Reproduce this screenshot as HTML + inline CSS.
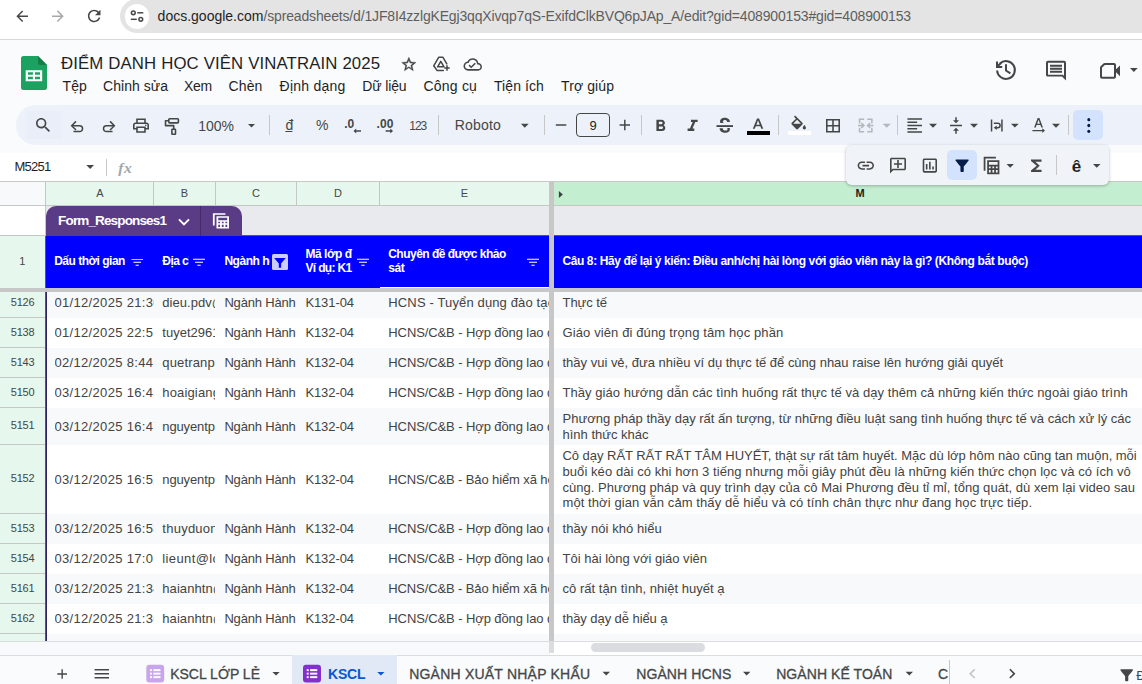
<!DOCTYPE html>
<html lang="vi">
<head>
<meta charset="utf-8">
<title>ĐIỂM DANH HỌC VIÊN VINATRAIN 2025 - Google Trang tính</title>
<style>
html,body{margin:0;padding:0;}
body{width:1142px;height:684px;overflow:hidden;background:#f9fbfd;font-family:"Liberation Sans",sans-serif;}
#app{position:relative;width:1142px;height:684px;overflow:hidden;background:#f9fbfd;}
.b{position:absolute;}
.t{position:absolute;white-space:pre;line-height:20px;height:20px;display:block;}
svg{position:absolute;overflow:visible;}
.sep{position:absolute;width:1px;background:#c7c7c7;}
</style>
</head>
<body>
<div id="app">
<!-- ===== browser chrome ===== -->
<div class="b" style="left:0;top:0;width:1142px;height:39px;background:#fff;"></div>
<div class="b" style="left:0;top:39px;width:1142px;height:1px;background:#d5d7da;"></div>
<div class="b" style="left:119.6px;top:-1px;width:1100px;height:34px;border-radius:17px;background:#e4e4e4;"></div>
<div class="b" style="left:124.5px;top:4px;width:24.5px;height:24.5px;border-radius:50%;background:#fff;"></div>
<svg style="left:0;top:0;color:#474747;" width="1" height="1" fill="#474747"><g transform="translate(13.50 7.50) scale(0.7250 0.7250)"><path d="M20 11H7.83l5.59-5.59L12 4l-8 8 8 8 1.41-1.41L7.83 13H20v-2z"/></g></svg>
<svg style="left:0;top:0;color:#a8a8a8;" width="1" height="1" fill="#a8a8a8"><g transform="translate(49.08 7.42) scale(0.7313 0.7313)"><path d="M12 4l-1.41 1.41L16.17 11H4v2h12.17l-5.58 5.59L12 20l8-8z"/></g></svg>
<svg style="left:0;top:0;color:#474747;" width="1" height="1" fill="#474747"><g transform="translate(84.74 6.54) scale(0.7880 0.7880)"><path d="M17.65 6.35C16.2 4.9 14.21 4 12 4c-4.42 0-7.99 3.58-7.99 8s3.570 8 7.990 8c3.730 0 6.840-2.550 7.730-6h-2.080c-.82 2.330-3.040 4-5.650 4-3.310 0-6-2.690-6-6s2.690-6 6-6c1.660 0 3.140.69 4.220 1.780L13 11h7V4l-2.350 2.350z"/></g></svg>
<svg style="left:0;top:0" width="1" height="1"><g fill="none" stroke="#474747" stroke-width="1.500">
<circle cx="133.300" cy="12.800" r="1.900"/><path d="M137.300 12.800H143.300"/>
<circle cx="140.800" cy="19.300" r="1.900"/><path d="M130.800 19.300H136.800"/></g></svg>
<!-- ===== docs header ===== -->
<svg style="left:21px;top:56px" width="26" height="34" viewBox="0 0 26 34">
<path d="M2.500 0H17L26 9V31.500A2.500 2.500 0 0 1 23.500 34H2.500A2.500 2.500 0 0 1 0 31.500V2.500A2.500 2.500 0 0 1 2.500 0z" fill="#1ba261"/>
<path d="M17 0L26 9H19.500A2.500 2.500 0 0 1 17 6.500z" fill="#137f47"/>
<path d="M4.700 14.200H21.200V25.200H4.700zM6.900 16.200V18.700H11.900V16.200zM14 16.200V18.700H19V16.200zM6.900 20.700V23.200H11.900V20.700zM14 20.700V23.200H19V20.700z" fill="#fff" fill-rule="evenodd"/>
</svg>
<svg style="left:0;top:0;color:#444746;" width="1" height="1" fill="#444746"><g transform="translate(400.27 55.78) scale(0.7150 0.7150)"><path stroke="currentColor" stroke-width="0.600" d="M22 9.240l-7.190-.62L12 2 9.190 8.630 2 9.240l5.460 4.730L5.820 21 12 16.900 18.180 21l-1.630-7.030L22 9.240zM12 15.400l-3.760 2.270 1-4.280-3.320-2.880 4.380-.38L12 6.100l1.710 4.040 4.380.38-3.320 2.880 1 4.280L12 15.400z"/></g></svg>
<svg style="left:0;top:0;color:#444746;" width="1" height="1" fill="#444746"><g transform="translate(463.50 55.25) scale(0.7708 0.7708)"><path d="M19.350 10.040C18.670 6.590 15.640 4 12 4 9.110 4 6.600 5.640 5.350 8.040 2.340 8.360 0 10.910 0 14c0 3.310 2.690 6 6 6h13c2.760 0 5-2.240 5-5 0-2.640-2.050-4.780-4.650-4.960zM19 18H6c-2.210 0-4-1.790-4-4 0-2.050 1.530-3.760 3.560-3.970l1.070-.11.5-.95C8.080 7.140 9.940 6 12 6c2.620 0 4.880 1.860 5.390 4.430l.3 1.500 1.530.11c1.560.1 2.780 1.410 2.780 2.960 0 1.650-1.350 3-3 3zm-9-3.820l-2.090-2.090L6.500 13.500 10 17l6.010-6.010-1.410-1.410z"/></g></svg>
<svg style="left:0;top:0;color:#444746;" width="1" height="1" fill="#444746"><g transform="translate(1044.00 58.71) scale(1.0000 0.9950)"><path d="M21.990 4c0-1.100-.89-2-1.990-2H4c-1.100 0-2 .9-2 2v12c0 1.100.9 2 2 2h14l4 4-.01-18zM20 4v13.170L18.830 16H4V4h16zM6 12h12v2H6zm0-3h12v2H6zm0-3h12v2H6z"/></g></svg>
<svg style="left:0;top:0;color:#444746;" width="1" height="1" fill="#444746"><g transform="translate(1098.00 59.08) scale(1.0000 0.9813)"><path d="M18 10.480V6c0-1.100-.9-2-2-2H6.830c-.53 0-1.040.21-1.410.59L2.590 7.410C2.210 7.790 2 8.300 2 8.830V18c0 1.100.9 2 2 2h12c1.100 0 2-.9 2-2v-4.480l4 3.980v-11l-4 3.980zM16 18H4V8.830L6.830 6H16v12z"/></g></svg>
<svg style="left:0;top:0;color:#444746;" width="1" height="1" fill="#444746"><g transform="translate(1124.61 60.00) scale(0.7700 0.8000)"><path d="M7 10l5 5 5-5z"/></g></svg>
<svg style="left:0;top:0" width="1" height="1"><g fill="none" stroke="#444746" stroke-width="1.500" stroke-linejoin="round" stroke-linecap="round">
<path d="M443.300 70.600H437.200L433.700 65.800L438.800 57.200H442.800L446.800 63.900"/>
<path d="M440.800 61.400L437.600 66.800H444z"/>
<path d="M447 65.300V70.700M444.300 68H449.700" stroke-linecap="butt"/></g>
<g fill="none" stroke="#444746" stroke-width="2"><path d="M997.100 70.500A8.900 8.900 0 1 0 999.900 63.500"/><path d="M1006 64.200V70.500L1010.400 73.300"/></g>
<path fill="#444746" d="M996 61.500L998 61.500L998 64.200L1000.600 62.200L1001.800 63.800L999.300 66H1002.200V68H996z"/></svg>
<!-- ===== toolbar ===== -->
<div class="b" style="left:16px;top:105px;width:1200px;height:40px;border-radius:20px;background:#edf2fa;"></div>
<div class="b" style="left:26px;top:111px;width:36px;height:28px;background:#e9eef8;"></div>
<div class="b" style="left:1073px;top:110px;width:30px;height:30px;border-radius:5px;background:#d3e3fd;"></div>
<div class="sep" style="left:269px;top:115px;height:20px;"></div>
<div class="sep" style="left:438px;top:115px;height:20px;"></div>
<div class="sep" style="left:544px;top:115px;height:20px;"></div>
<div class="sep" style="left:641px;top:115px;height:20px;"></div>
<div class="sep" style="left:778px;top:115px;height:20px;"></div>
<div class="sep" style="left:897px;top:115px;height:20px;"></div>
<div class="sep" style="left:1068px;top:115px;height:20px;"></div>
<div class="b" style="left:576px;top:112.600px;width:32px;height:22.200px;border:1px solid #444746;border-radius:4px;box-sizing:content-box;"></div>
<div class="b" style="left:747px;top:131px;width:23px;height:4px;background:#000;"></div>
<div class="b" style="left:787.5px;top:131px;width:23px;height:4px;background:#fff;"></div>
<svg style="left:0;top:0;color:#444746;" width="1" height="1" fill="#444746"><g transform="translate(33.60 115.60) scale(0.8005 0.8005)"><path d="M15.500 14h-.79l-.28-.27C15.410 12.590 16 11.110 16 9.500 16 5.910 13.090 3 9.500 3S3 5.910 3 9.500 5.910 16 9.500 16c1.610 0 3.090-.59 4.230-1.570l.27.28v.79l5 4.990L20.490 19l-4.990-5zm-6 0C7.010 14 5 11.990 5 9.500S7.010 5 9.500 5 14 7.010 14 9.500 11.990 14 9.500 14z"/></g></svg>
<svg style="left:0;top:0;color:#444746;" width="1" height="1" fill="#444746"><g transform="translate(131.40 116.00) scale(0.8000 0.8000)"><path d="M19 8h-1V3H6v5H5c-1.660 0-3 1.340-3 3v6h4v4h12v-4h4v-6c0-1.660-1.340-3-3-3zM8 5h8v3H8V5zm8 12v2H8v-4h8v2zm2-2v-2H6v2H4v-4c0-.55.45-1 1-1h14c.55 0 1 .45 1 1v4h-2z"/><circle cx="18" cy="11.500" r="1"/></g></svg>
<svg style="left:0;top:0;color:#444746;" width="1" height="1" fill="#444746"><g transform="translate(243.10 116.95) scale(0.7000 0.7000)"><path d="M7 10l5 5 5-5z"/></g></svg>
<svg style="left:0;top:0;color:#444746;" width="1" height="1" fill="#444746"><g transform="translate(515.44 115.95) scale(0.7800 0.7800)"><path d="M7 10l5 5 5-5z"/></g></svg>
<svg style="left:0;top:0;color:#444746;" width="1" height="1" fill="#444746"><g transform="translate(923.40 115.70) scale(0.8000 0.8000)"><path d="M7 10l5 5 5-5z"/></g></svg>
<svg style="left:0;top:0;color:#444746;" width="1" height="1" fill="#444746"><g transform="translate(964.40 115.70) scale(0.8000 0.8000)"><path d="M7 10l5 5 5-5z"/></g></svg>
<svg style="left:0;top:0;color:#444746;" width="1" height="1" fill="#444746"><g transform="translate(1005.61 116.07) scale(0.7700 0.7700)"><path d="M7 10l5 5 5-5z"/></g></svg>
<svg style="left:0;top:0;color:#444746;" width="1" height="1" fill="#444746"><g transform="translate(1046.40 115.70) scale(0.8000 0.8000)"><path d="M7 10l5 5 5-5z"/></g></svg>
<svg style="left:0;top:0;color:#b4b7ba;" width="1" height="1" fill="#b4b7ba"><g transform="translate(877.03 115.58) scale(0.8100 0.8100)"><path d="M7 10l5 5 5-5z"/></g></svg>
<svg style="left:0;top:0;color:#444746;" width="1" height="1" fill="#444746"><g transform="translate(350.77 126.17) scale(0.6818 0.7429)"><path d="M8 3L4 6.500 8 10V7.500h7v-2H8z"/></g></svg>
<svg style="left:0;top:0;color:#444746;" width="1" height="1" fill="#444746"><g transform="translate(382.91 126.17) scale(0.6727 0.7429)"><path d="M11 3l4 3.500-4 3.500V7.500H4v-2h7z"/></g></svg>
<svg style="left:0;top:0;color:#444746;" width="1" height="1" fill="#444746"><g transform="translate(552.05 116.00) scale(0.7500 0.7500)"><path d="M5 11h14v2H5z"/></g></svg>
<svg style="left:0;top:0;color:#444746;" width="1" height="1" fill="#444746"><g transform="translate(615.89 116.09) scale(0.7429 0.7429)"><path d="M19 13h-6v6h-2v-6H5v-2h6V5h2v6h6v2z"/></g></svg>
<svg style="left:0;top:0;color:#444746;" width="1" height="1" fill="#444746"><g transform="translate(650.60 116.47) scale(0.8279 0.8071)"><path d="M15.600 10.790c.97-.67 1.650-1.770 1.650-2.790 0-2.260-1.750-4-4-4H7v14h7.040c2.090 0 3.710-1.700 3.710-3.790 0-1.520-.86-2.820-2.150-3.420zM10 6.500h3c.83 0 1.500.67 1.500 1.500s-.67 1.500-1.500 1.500h-3v-3zm3.500 9H10v-3h3.500c.83 0 1.500.67 1.500 1.500s-.67 1.500-1.500 1.500z"/></g></svg>
<svg style="left:0;top:0;color:#444746;" width="1" height="1" fill="#444746"><g transform="translate(682.60 116.47) scale(0.8333 0.8071)"><path d="M10 4v3h2.210l-3.420 8H6v3h8v-3h-2.210l3.420-8H18V4z"/></g></svg>
<svg style="left:0;top:0;color:#444746;" width="1" height="1" fill="#444746"><g transform="translate(713.75 115.08) scale(0.9167 0.9167)"><path d="M3 11h18v2H3z"/><path d="M7.240 8.750c-.26-.48-.39-1.030-.39-1.670 0-.61.13-1.160.4-1.670.26-.5.630-.93 1.110-1.290.48-.35 1.050-.63 1.700-.83.660-.19 1.390-.29 2.180-.29.810 0 1.540.11 2.210.34.660.22 1.230.54 1.690.94.470.4.830.88 1.080 1.430.25.550.38 1.150.38 1.810h-3.010c0-.31-.05-.59-.15-.85-.09-.27-.24-.49-.44-.68-.2-.19-.45-.33-.75-.44-.3-.1-.66-.16-1.060-.16-.39 0-.74.04-1.030.13-.29.09-.53.21-.72.36-.19.16-.34.34-.44.55-.1.210-.15.430-.15.660 0 .48.25.88.74 1.210.18.120.37.230.6.340H7.390c-.05-.08-.11-.17-.15-.25z"/><path d="M14.500 14c.21.170.35.360.43.570.07.200.11.430.11.690 0 .23-.05.450-.14.660-.09.200-.23.380-.42.530-.19.150-.42.260-.71.350-.29.080-.63.130-1.010.130-.43 0-.83-.04-1.180-.13s-.66-.23-.91-.42c-.25-.19-.45-.44-.59-.75-.14-.31-.25-.76-.25-1.210H6.400c0 .55.080 1.130.24 1.580.16.450.37.850.65 1.210.28.350.6.660.98.920.37.260.78.480 1.220.65.440.17.900.30 1.380.39.480.08.960.13 1.440.13.80 0 1.530-.09 2.180-.28s1.210-.45 1.670-.79c.46-.34.82-.77 1.070-1.270s.38-1.070.38-1.710c0-.45-.06-.87-.18-1.250z"/></g></svg>
<svg style="left:0;top:0;color:#444746;" width="1" height="1" fill="#444746"><g transform="translate(748.37 116.29) scale(0.8065 0.7357)"><path d="M5.490 17h2.420l1.270-3.580h5.650L16.090 17h2.420L13.250 3h-2.500L5.490 17zm4.420-5.610l2.030-5.790h.12l2.030 5.790H9.910z"/></g></svg>
<svg style="left:0;top:0;color:#444746;" width="1" height="1" fill="#444746"><g transform="translate(788.97 115.61) scale(0.8110 0.8110)"><path d="M16.560 8.940L7.620 0 6.210 1.410l2.380 2.380-5.150 5.150c-.59.59-.59 1.540 0 2.120l5.500 5.500c.29.29.68.44 1.060.44s.77-.15 1.060-.44l5.500-5.500c.59-.58.59-1.530 0-2.120zM5.210 10L10 5.210 14.790 10H5.210zM19 11.500s-2 2.170-2 3.500c0 1.100.9 2 2 2s2-.9 2-2c0-1.330-2-3.500-2-3.500z"/></g></svg>
<svg style="left:0;top:0;color:#444746;" width="1" height="1" fill="#444746"><g transform="translate(823.67 116.62) scale(0.7778 0.7611)"><path d="M3 3v18h18V3H3zm8 16H5v-6h6v6zm0-8H5V5h6v6zm8 8h-6v-6h6v6zm0-8h-6V5h6v6z"/></g></svg>
<svg style="left:0;top:0;color:#b4b7ba;" width="1" height="1" fill="#b4b7ba"><g transform="translate(856.46 116.26) scale(0.7700 0.7700)"><path d="M3 3h7v2H5v4H3zM14 3h7v6h-2V5h-5zM3 15h2v4h5v2H3zM19 15h2v6h-7v-2h5zM2 11h5.200L5.600 9.400 7 8l4 4-4 4-1.400-1.400L7.200 13H2zM22 11h-5.200l1.600-1.600L17 8l-4 4 4 4 1.400-1.400-1.600-1.600H22z"/></g></svg>
<svg style="left:0;top:0;color:#444746;" width="1" height="1" fill="#444746"><g transform="translate(904.97 115.77) scale(0.8111 0.8111)"><path d="M15 15H3v2h12v-2zm0-8H3v2h12V7zM3 13h18v-2H3v2zm0 8h18v-2H3v2zM3 3v2h18V3H3z"/></g></svg>
<svg style="left:0;top:0;color:#444746;" width="1" height="1" fill="#444746"><g transform="translate(947.00 116.50) scale(0.7500 0.7500)"><path d="M8 19h3v4h2v-4h3l-4-4-4 4zm8-14h-3V1h-2v4H8l4 4 4-4zM4 11v2h16v-2H4z"/></g></svg>
<svg style="left:0;top:0;color:#444746;" width="1" height="1" fill="#444746"><g transform="translate(987.82 116.57) scale(0.7438 0.7438)"><path d="M4 4h2v16H4zM18 4h2v16h-2z"/><path fill="none" stroke="currentColor" stroke-width="2" d="M8 9h5.500a3 3 0 0 1 0 6H10"/><path d="M12 12l-4 3 4 3z"/></g></svg>
<svg style="left:0;top:0;color:#444746;" width="1" height="1" fill="#444746"><g transform="translate(1030.36 117.33) scale(0.6811 0.6811)"><path d="M5.490 15h2.420l1.270-3.580h5.650L16.090 15h2.420L13.250 1h-2.500L5.490 15zm4.420-5.610l2.030-5.790h.12l2.030 5.790H9.910z"/><path d="M3 18.500h14.500V16l4 3.500-4 3.500v-2.500H3z"/></g></svg>
<svg style="left:0;top:0;color:#041e49;" width="1" height="1" fill="#041e49"><g transform="translate(1079.80 115.50) scale(0.7500 0.8333)"><circle cx="12" cy="5" r="2"/><circle cx="12" cy="12" r="2"/><circle cx="12" cy="19" r="2"/></g></svg>
<svg style="left:0;top:0" width="1" height="1"><g fill="none" stroke="#444746" stroke-width="1.500">
<path d="M72 125.700H79.600a2.950 2.950 0 0 1 0 5.900H73.500"/><path d="M76 121.400L71.700 125.700L76 130"/>
<path d="M114.050 125.700H106.450a2.950 2.950 0 0 0 0 5.900H112.550"/><path d="M110.050 121.400L114.350 125.700L110.050 130"/>
<g stroke-width="1.600" stroke-linejoin="round"><rect x="168.800" y="118.700" width="9.600" height="4.200" rx="0.800"/><path d="M168.800 120.800H165.500V125.600H173.700V129.200"/><rect x="171.900" y="129.200" width="3.600" height="5" rx="0.500"/></g>
</g></svg>
<!-- ===== formula bar ===== -->
<div class="b" style="left:0;top:152.5px;width:1142px;height:28.5px;background:#fff;"></div>
<div class="b" style="left:0;top:181px;width:1142px;height:1px;background:#c7c7c7;"></div>
<div class="sep" style="left:106px;top:159px;height:17px;background:#c7c7c7;"></div>
<!-- ===== grid ===== -->
<div class="b" style="left:0px;top:182px;width:1142px;height:23.5px;background:#e6f7ed;"></div>
<div class="b" style="left:0px;top:182px;width:45.5px;height:23.5px;background:#f8f9fa;"></div>
<div class="b" style="left:554px;top:182px;width:588px;height:23.5px;background:#c4eed0;"></div>
<div class="b" style="left:45.0px;top:182px;width:1px;height:23.5px;background:#c4c7c5;"></div>
<div class="b" style="left:153.0px;top:182px;width:1px;height:23.5px;background:#c4c7c5;"></div>
<div class="b" style="left:215.0px;top:182px;width:1px;height:23.5px;background:#c4c7c5;"></div>
<div class="b" style="left:296.0px;top:182px;width:1px;height:23.5px;background:#c4c7c5;"></div>
<div class="b" style="left:379.0px;top:182px;width:1px;height:23.5px;background:#c4c7c5;"></div>
<div class="b" style="left:0px;top:205px;width:1142px;height:1px;background:#c4c7c5;"></div>
<div class="b" style="left:0px;top:206px;width:1142px;height:29.5px;background:#e8eaed;"></div>
<div class="b" style="left:0px;top:206px;width:45.5px;height:29.5px;background:#fff;"></div>
<div class="b" style="left:45px;top:206px;width:1px;height:29.5px;background:#c4c7c5;"></div>
<div class="b" style="left:0px;top:235px;width:45.5px;height:1px;background:#c4c7c5;"></div>
<div class="b" style="left:46px;top:206px;width:196px;height:30px;background:#5a3c86;border-radius:10px 10px 0 0;"></div>
<div class="b" style="left:200px;top:206px;width:1px;height:29.5px;background:#452b6c;"></div>
<div class="b" style="left:242px;top:235px;width:900px;height:1px;background:#188038;"></div>
<div class="b" style="left:0px;top:236px;width:45.5px;height:51.5px;background:#e6f7ed;"></div>
<div class="b" style="left:46px;top:236px;width:1096px;height:51.5px;background:#0000ff;"></div>
<div class="b" style="left:380px;top:286.5px;width:170px;height:1px;background:#fff;"></div>
<div class="b" style="left:45px;top:236px;width:1px;height:51.5px;background:#188038;"></div>
<div class="b" style="left:272.2px;top:254px;width:15.8px;height:15.8px;background:#ccccff;border-radius:1.500px;"></div>
<div class="b" style="left:46px;top:291.5px;width:1096px;height:26.0px;background:#f8f9fa;"></div>
<div class="b" style="left:0px;top:291.5px;width:45.5px;height:26.0px;background:#e6f7ed;"></div>
<div class="b" style="left:0px;top:317.0px;width:45.5px;height:1px;background:#c4c7c5;"></div>
<div class="b" style="left:46px;top:317.5px;width:1096px;height:30.0px;background:#ffffff;"></div>
<div class="b" style="left:0px;top:317.5px;width:45.5px;height:30.0px;background:#e6f7ed;"></div>
<div class="b" style="left:0px;top:347.0px;width:45.5px;height:1px;background:#c4c7c5;"></div>
<div class="b" style="left:46px;top:347.5px;width:1096px;height:30.0px;background:#f8f9fa;"></div>
<div class="b" style="left:0px;top:347.5px;width:45.5px;height:30.0px;background:#e6f7ed;"></div>
<div class="b" style="left:0px;top:377.0px;width:45.5px;height:1px;background:#c4c7c5;"></div>
<div class="b" style="left:46px;top:377.5px;width:1096px;height:30.0px;background:#ffffff;"></div>
<div class="b" style="left:0px;top:377.5px;width:45.5px;height:30.0px;background:#e6f7ed;"></div>
<div class="b" style="left:0px;top:407.0px;width:45.5px;height:1px;background:#c4c7c5;"></div>
<div class="b" style="left:46px;top:407.5px;width:1096px;height:37.0px;background:#f8f9fa;"></div>
<div class="b" style="left:0px;top:407.5px;width:45.5px;height:37.0px;background:#e6f7ed;"></div>
<div class="b" style="left:0px;top:444.0px;width:45.5px;height:1px;background:#c4c7c5;"></div>
<div class="b" style="left:46px;top:444.5px;width:1096px;height:69.0px;background:#ffffff;"></div>
<div class="b" style="left:0px;top:444.5px;width:45.5px;height:69.0px;background:#e6f7ed;"></div>
<div class="b" style="left:0px;top:513.0px;width:45.5px;height:1px;background:#c4c7c5;"></div>
<div class="b" style="left:46px;top:513.5px;width:1096px;height:30.0px;background:#f8f9fa;"></div>
<div class="b" style="left:0px;top:513.5px;width:45.5px;height:30.0px;background:#e6f7ed;"></div>
<div class="b" style="left:0px;top:543.0px;width:45.5px;height:1px;background:#c4c7c5;"></div>
<div class="b" style="left:46px;top:543.5px;width:1096px;height:30.0px;background:#ffffff;"></div>
<div class="b" style="left:0px;top:543.5px;width:45.5px;height:30.0px;background:#e6f7ed;"></div>
<div class="b" style="left:0px;top:573.0px;width:45.5px;height:1px;background:#c4c7c5;"></div>
<div class="b" style="left:46px;top:573.5px;width:1096px;height:30.0px;background:#f8f9fa;"></div>
<div class="b" style="left:0px;top:573.5px;width:45.5px;height:30.0px;background:#e6f7ed;"></div>
<div class="b" style="left:0px;top:603.0px;width:45.5px;height:1px;background:#c4c7c5;"></div>
<div class="b" style="left:46px;top:603.5px;width:1096px;height:30.0px;background:#ffffff;"></div>
<div class="b" style="left:0px;top:603.5px;width:45.5px;height:30.0px;background:#e6f7ed;"></div>
<div class="b" style="left:0px;top:633.0px;width:45.5px;height:1px;background:#c4c7c5;"></div>
<div class="b" style="left:46px;top:633.5px;width:1096px;height:7.5px;background:#f8f9fa;"></div>
<div class="b" style="left:0px;top:633.5px;width:45.5px;height:7.5px;background:#e6f7ed;"></div>
<div class="b" style="left:0px;top:287.5px;width:1142px;height:4px;background:#c7c7c7;"></div>
<div class="b" style="left:45px;top:291.5px;width:1px;height:349.5px;background:#188038;"></div>
<div class="b" style="left:46px;top:291.5px;width:1px;height:349.5px;background:#2f2163;"></div>
<div class="b" style="left:549px;top:182px;width:5px;height:459px;background:#c7c7c7;"></div>
<div class="b" style="left:0px;top:641px;width:1142px;height:14px;background:#ffffff;"></div>
<div class="b" style="left:0px;top:641px;width:549.5px;height:14px;background:#f8f9fa;"></div>
<div class="b" style="left:0px;top:641px;width:1142px;height:1px;background:#dadce0;"></div>
<div class="b" style="left:549px;top:642px;width:5px;height:10.5px;background:#dadce0;"></div>
<div class="b" style="left:591px;top:643px;width:114px;height:8.5px;background:#dadce0;border-radius:4.5px;"></div>
<svg style="left:0;top:0;color:#3c4043;" width="1" height="1" fill="#3c4043"><g transform="translate(558.90 190.90) scale(0.7800 1.0143)"><path d="M0 0l5 3.500L0 7z"/></g></svg>
<svg style="left:0;top:0;color:#fff;" width="1" height="1" fill="#fff"><g transform="translate(173.09 211.22) scale(0.9091 0.9091)"><path fill="none" stroke="currentColor" stroke-width="2.200" d="M6.500 9l5.500 5.500L17.500 9"/></g></svg>
<svg style="left:0;top:0;color:#fff;" width="1" height="1" fill="#fff"><g transform="translate(209.32 211.78) scale(0.8944 0.7600)"><path d="M8 6h14v16H8zm2 2v3h10V8zm0 5v2h2v-2zm4 0v2h2v-2zm4 0v2h2v-2zm-8 4v3h2v-3zm4 0v3h2v-3zm4 0v3h2v-3z" fill-rule="evenodd"/><path d="M4 2h14v2H6v14H4z"/></g></svg>
<svg style="left:0;top:0;color:#fff;" width="1" height="1" fill="#fff"><g transform="translate(129.47 254.57) scale(0.6444 0.6444)"><path d="M9.500 17.200h5v-1.400h-5zM3 6.800v1.400h18V6.800zM6 12.700h12v-1.400H6z"/></g></svg>
<svg style="left:0;top:0;color:#fff;" width="1" height="1" fill="#fff"><g transform="translate(191.00 254.30) scale(0.6667 0.6667)"><path d="M9.500 17.200h5v-1.400h-5zM3 6.800v1.400h18V6.800zM6 12.700h12v-1.400H6z"/></g></svg>
<svg style="left:0;top:0;color:#fff;" width="1" height="1" fill="#fff"><g transform="translate(355.00 254.30) scale(0.6667 0.6667)"><path d="M9.500 17.200h5v-1.400h-5zM3 6.800v1.400h18V6.800zM6 12.700h12v-1.400H6z"/></g></svg>
<svg style="left:0;top:0;color:#fff;" width="1" height="1" fill="#fff"><g transform="translate(525.00 254.30) scale(0.6667 0.6667)"><path d="M9.500 17.200h5v-1.400h-5zM3 6.800v1.400h18V6.800zM6 12.700h12v-1.400H6z"/></g></svg>
<svg style="left:0;top:0" width="1" height="1"><path fill="#0000ff" d="M274.200 258H285.700L281.100 263.500V267.800H278.800V263.500z"/></svg>
<!-- ===== overflow popup ===== -->
<div class="b" style="left:846px;top:145px;width:262.5px;height:40px;border-radius:6px;background:#f0f4f9;box-shadow:0 1px 3px 1px rgba(60,64,67,.12),0 1px 2px rgba(60,64,67,.18);"></div>
<div class="b" style="left:947px;top:150px;width:30px;height:30px;border-radius:5px;background:#d3e3fd;"></div>
<div class="sep" style="left:1056px;top:155px;height:20px;"></div>
<svg style="left:0;top:0;color:#444746;" width="1" height="1" fill="#444746"><g transform="translate(80.91 157.00) scale(0.7700 0.8000)"><path d="M7 10l5 5 5-5z"/></g></svg>
<svg style="left:0;top:0;color:#444746;" width="1" height="1" fill="#444746"><g transform="translate(855.96 155.76) scale(0.8200 0.8200)"><path d="M3.900 12c0-1.710 1.390-3.100 3.100-3.100h4V7H7c-2.760 0-5 2.240-5 5s2.240 5 5 5h4v-1.900H7c-1.710 0-3.100-1.390-3.100-3.100zM8 13h8v-2H8v2zm9-6h-4v1.900h4c1.710 0 3.100 1.390 3.100 3.100s-1.390 3.100-3.100 3.100h-4V17h4c2.760 0 5-2.240 5-5s-2.240-5-5-5z"/></g></svg>
<svg style="left:0;top:0;color:#444746;" width="1" height="1" fill="#444746"><g transform="translate(888.40 156.12) scale(0.8000 0.7900)"><path d="M2 4c0-1.100.9-2 2-2h16c1.100 0 2 .9 2 2v12c0 1.100-.9 2-2 2H6l-4 4V4zm2 13.170L5.170 16H20V4H4v13.170zM11 5h2v4h4v2h-4v4h-2v-4H7V9h4z"/></g></svg>
<svg style="left:0;top:0;color:#444746;" width="1" height="1" fill="#444746"><g transform="translate(920.32 156.13) scale(0.7944 0.7889)"><path d="M9 17H7v-7h2v7zm4 0h-2V7h2v10zm4 0h-2v-4h2v4zm2 2H5V5h14v14zm0-16H5c-1.100 0-2 .9-2 2v14c0 1.100.9 2 2 2h14c1.100 0 2-.9 2-2V5c0-1.100-.9-2-2-2z"/></g></svg>
<svg style="left:0;top:0;color:#041e49;" width="1" height="1" fill="#041e49"><g transform="translate(952.15 156.38) scale(0.8295 0.7812)"><path d="M4.250 5.610C6.270 8.200 10 13 10 13v6c0 .55.45 1 1 1h2c.55 0 1-.45 1-1v-6s3.720-4.800 5.740-7.390c.51-.66.04-1.610-.79-1.610H5.040c-.83 0-1.300.95-.79 1.610z"/></g></svg>
<svg style="left:0;top:0;color:#444746;" width="1" height="1" fill="#444746"><g transform="translate(980.21 155.13) scale(0.8722 0.8722)"><path d="M8 6h14v16H8zm2 2v3h10V8zm0 5v2h2v-2zm4 0v2h2v-2zm4 0v2h2v-2zm-8 4v3h2v-3zm4 0v3h2v-3zm4 0v3h2v-3z" fill-rule="evenodd"/><path d="M4 2h14v2H6v14H4z"/></g></svg>
<svg style="left:0;top:0;color:#444746;" width="1" height="1" fill="#444746"><g transform="translate(1001.32 156.55) scale(0.7400 0.7400)"><path d="M7 10l5 5 5-5z"/></g></svg>
<svg style="left:0;top:0;color:#444746;" width="1" height="1" fill="#444746"><g transform="translate(1025.75 156.38) scale(0.8750 0.7812)"><path d="M18 4H6v2l6.500 6L6 18v2h12v-3h-7l5-5-5-5h7z"/></g></svg>
<svg style="left:0;top:0;color:#444746;" width="1" height="1" fill="#444746"><g transform="translate(1087.75 156.43) scale(0.7500 0.7500)"><path d="M7 10l5 5 5-5z"/></g></svg>
<!-- ===== bottom bar ===== -->
<div class="b" style="left:0;top:655px;width:1142px;height:29px;background:#f9fbfd;"></div>
<div class="b" style="left:0;top:654.5px;width:1142px;height:1px;background:#dadce0;"></div>
<div class="b" style="left:292.3px;top:655px;width:104.6px;height:29px;background:#e1e9f7;"></div>
<div class="b" style="left:949px;top:660px;width:1px;height:24px;background:#c4c7c5;"></div>
<svg style="left:0;top:0;color:#444746;" width="1" height="1" fill="#444746"><g transform="translate(53.84 665.69) scale(0.6929 0.6929)"><path d="M19 13h-6v6h-2v-6H5v-2h6V5h2v6h6v2z"/></g></svg>
<svg style="left:0;top:0;color:#444746;" width="1" height="1" fill="#444746"><g transform="translate(92.20 664.20) scale(0.8000 0.8000)"><path d="M3 18h18v-2H3v2zm0-5h18v-2H3v2zm0-7v2h18V6H3z"/></g></svg>
<svg style="left:0;top:0;color:#c8a6ec;" width="1" height="1" fill="#c8a6ec"><g transform="translate(146.30 664.70) scale(0.7458 0.7458)"><rect x="0" y="0" width="24" height="24" rx="4"/><g fill="#fff"><rect x="5" y="6" width="2.600" height="2.600"/><rect x="9.500" y="6" width="9.500" height="2.600"/><rect x="5" y="10.700" width="2.600" height="2.600"/><rect x="9.500" y="10.700" width="9.500" height="2.600"/><rect x="5" y="15.400" width="2.600" height="2.600"/><rect x="9.500" y="15.400" width="9.500" height="2.600"/></g></g></svg>
<svg style="left:0;top:0;color:#8430ce;" width="1" height="1" fill="#8430ce"><g transform="translate(303.00 664.70) scale(0.7500 0.7458)"><rect x="0" y="0" width="24" height="24" rx="4"/><g fill="#fff"><rect x="5" y="6" width="2.600" height="2.600"/><rect x="9.500" y="6" width="9.500" height="2.600"/><rect x="5" y="10.700" width="2.600" height="2.600"/><rect x="9.500" y="10.700" width="9.500" height="2.600"/><rect x="5" y="15.400" width="2.600" height="2.600"/><rect x="9.500" y="15.400" width="9.500" height="2.600"/></g></g></svg>
<svg style="left:0;top:0;color:#444746;" width="1" height="1" fill="#444746"><g transform="translate(267.29 664.58) scale(0.7300 0.7300)"><path d="M7 10l5 5 5-5z"/></g></svg>
<svg style="left:0;top:0;color:#0b57d0;" width="1" height="1" fill="#0b57d0"><g transform="translate(372.09 664.58) scale(0.7300 0.7300)"><path d="M7 10l5 5 5-5z"/></g></svg>
<svg style="left:0;top:0;color:#444746;" width="1" height="1" fill="#444746"><g transform="translate(597.25 664.33) scale(0.7500 0.7500)"><path d="M7 10l5 5 5-5z"/></g></svg>
<svg style="left:0;top:0;color:#444746;" width="1" height="1" fill="#444746"><g transform="translate(737.82 664.45) scale(0.7400 0.7400)"><path d="M7 10l5 5 5-5z"/></g></svg>
<svg style="left:0;top:0;color:#444746;" width="1" height="1" fill="#444746"><g transform="translate(900.42 664.45) scale(0.7400 0.7400)"><path d="M7 10l5 5 5-5z"/></g></svg>
<svg style="left:0;top:0;color:#c4c7c5;" width="1" height="1" fill="#c4c7c5"><g transform="translate(961.88 663.75) scale(0.8772 0.8250)"><path d="M15.410 7.410L14 6l-6 6 6 6 1.410-1.410L10.830 12z"/></g></svg>
<svg style="left:0;top:0;color:#444746;" width="1" height="1" fill="#444746"><g transform="translate(1002.23 663.75) scale(0.8232 0.8250)"><path d="M10 6L8.590 7.410 13.170 12l-4.580 4.590L10 18l6-6z"/></g></svg>
<svg style="left:0;top:0;color:#444746;" width="1" height="1" fill="#444746"><g transform="translate(1117.20 666.18) scale(0.7918 0.7562)"><path d="M4.250 5.610C6.270 8.200 10 13 10 13v6c0 .55.45 1 1 1h2c.55 0 1-.45 1-1v-6s3.720-4.800 5.740-7.390c.51-.66.04-1.610-.79-1.610H5.040c-.83 0-1.300.95-.79 1.610z"/></g></svg>
<!-- ===== texts ===== -->
<span class="t" style="left:157.6px;top:6.0px;font-size:14px;color:#1f1f1f;">docs.google.com</span>
<span class="t" style="left:263.5px;top:6.0px;font-size:14px;color:#5e5e5e;letter-spacing:-0.161px;">/spreadsheets/d/1JF8I4zzlgKEgj3qqXivqp7qS-ExifdClkBVQ6pJAp_A/edit?gid=408900153#gid=408900153</span>
<span class="t" style="left:61.0px;top:53.5px;font-size:16.8px;color:#1f1f1f;letter-spacing:0.133px;">ĐIỂM DANH HỌC VIÊN VINATRAIN 2025</span>
<span class="t" style="left:62.4px;top:76.0px;font-size:14px;color:#1f1f1f;letter-spacing:0.190px;">Tệp</span>
<span class="t" style="left:103.0px;top:76.0px;font-size:14px;color:#1f1f1f;letter-spacing:0.042px;">Chỉnh sửa</span>
<span class="t" style="left:184.0px;top:76.0px;font-size:14px;color:#1f1f1f;letter-spacing:-0.319px;">Xem</span>
<span class="t" style="left:228.4px;top:76.0px;font-size:14px;color:#1f1f1f;letter-spacing:0.180px;">Chèn</span>
<span class="t" style="left:279.6px;top:76.0px;font-size:14px;color:#1f1f1f;letter-spacing:0.220px;">Định dạng</span>
<span class="t" style="left:362.3px;top:76.0px;font-size:14px;color:#1f1f1f;letter-spacing:-0.150px;">Dữ liệu</span>
<span class="t" style="left:423.5px;top:76.0px;font-size:14px;color:#1f1f1f;letter-spacing:0.207px;">Công cụ</span>
<span class="t" style="left:494.0px;top:76.0px;font-size:14px;color:#1f1f1f;letter-spacing:0.069px;">Tiện ích</span>
<span class="t" style="left:561.0px;top:76.0px;font-size:14px;color:#1f1f1f;letter-spacing:0.102px;">Trợ giúp</span>
<span class="t" style="left:198.3px;top:116.0px;font-size:14px;color:#444746;letter-spacing:-0.089px;">100%</span>
<span class="t" style="left:285.4px;top:115.0px;font-size:14px;color:#444746;letter-spacing:-0.797px;text-decoration:underline;">đ</span>
<span class="t" style="left:316.0px;top:115.0px;font-size:14px;color:#444746;letter-spacing:-1.953px;">%</span>
<span class="t" style="left:344.3px;top:114.0px;font-size:12px;color:#444746;font-weight:700;letter-spacing:-0.210px;">.0</span>
<span class="t" style="left:376.4px;top:114.0px;font-size:12px;color:#444746;font-weight:700;letter-spacing:0.165px;">.00</span>
<span class="t" style="left:409.2px;top:116.0px;font-size:12px;color:#444746;letter-spacing:-0.972px;">123</span>
<span class="t" style="left:454.7px;top:115.0px;font-size:14px;color:#444746;letter-spacing:0.208px;">Roboto</span>
<span class="t" style="left:589.5px;top:115.5px;font-size:13px;color:#1f1f1f;letter-spacing:-0.234px;">9</span>
<span class="t" style="left:1071.7px;top:156.5px;font-size:17px;color:#1f1f1f;font-weight:700;letter-spacing:0.831px;">ê</span>
<span class="t" style="left:14.5px;top:156.5px;font-size:13px;color:#1f1f1f;letter-spacing:-0.767px;">M5251</span>
<span class="t" style="left:118.3px;top:157.5px;font-size:15.5px;color:#a3a7ab;font-weight:700;font-family:'Liberation Serif', serif;letter-spacing:0.452px;font-style:italic;">fx</span>
<span class="t" style="left:99.8px;top:183.0px;font-size:11px;color:#444746;transform:translateX(-50%);">A</span>
<span class="t" style="left:184.5px;top:183.0px;font-size:11px;color:#444746;transform:translateX(-50%);">B</span>
<span class="t" style="left:256.0px;top:183.0px;font-size:11px;color:#444746;transform:translateX(-50%);">C</span>
<span class="t" style="left:338.0px;top:183.0px;font-size:11px;color:#444746;transform:translateX(-50%);">D</span>
<span class="t" style="left:464.5px;top:183.0px;font-size:11px;color:#444746;transform:translateX(-50%);">E</span>
<span class="t" style="left:860.0px;top:183.0px;font-size:11px;color:#1f1f1f;font-weight:700;transform:translateX(-50%);">M</span>
<span class="t" style="left:58.1px;top:210.5px;font-size:13.5px;color:#fff;font-weight:700;letter-spacing:-0.855px;">Form_Responses1</span>
<span class="t" style="left:54.2px;top:251.0px;font-size:12px;color:#fff;font-weight:700;letter-spacing:-0.496px;">Dấu thời gian</span>
<span class="t" style="left:162.3px;top:251.0px;font-size:12px;color:#fff;font-weight:700;letter-spacing:-0.553px;width:27.2px;overflow:hidden;">Địa chỉ</span>
<span class="t" style="left:224.4px;top:251.0px;font-size:12px;color:#fff;font-weight:700;letter-spacing:-0.462px;width:45.6px;overflow:hidden;">Ngành học</span>
<span class="t" style="left:305.4px;top:244.0px;font-size:12px;color:#fff;font-weight:700;letter-spacing:-0.450px;">Mã lớp đ</span>
<span class="t" style="left:305.4px;top:258.0px;font-size:12px;color:#fff;font-weight:700;letter-spacing:-0.637px;">Ví dụ: K1</span>
<span class="t" style="left:388.2px;top:244.0px;font-size:12px;color:#fff;font-weight:700;letter-spacing:-0.511px;">Chuyên đề được khảo</span>
<span class="t" style="left:388.2px;top:258.0px;font-size:12px;color:#fff;font-weight:700;letter-spacing:-0.378px;">sát</span>
<span class="t" style="left:562.4px;top:251.0px;font-size:12px;color:#fff;font-weight:700;letter-spacing:-0.386px;">Câu 8: Hãy để lại ý kiến: Điều anh/chị hài lòng với giáo viên này là gì? (Không bắt buộc)</span>
<span class="t" style="left:22.3px;top:251.0px;font-size:11px;color:#444746;transform:translateX(-50%);">1</span>
<span class="t" style="left:10.8px;top:292.0px;font-size:11px;color:#444746;letter-spacing:-0.224px;">5126</span>
<span class="t" style="left:10.8px;top:322.0px;font-size:11px;color:#444746;letter-spacing:-0.224px;">5138</span>
<span class="t" style="left:10.8px;top:352.0px;font-size:11px;color:#444746;letter-spacing:-0.224px;">5143</span>
<span class="t" style="left:10.8px;top:382.0px;font-size:11px;color:#444746;letter-spacing:-0.224px;">5150</span>
<span class="t" style="left:10.8px;top:415.0px;font-size:11px;color:#444746;letter-spacing:-0.224px;">5151</span>
<span class="t" style="left:10.8px;top:468.0px;font-size:11px;color:#444746;letter-spacing:-0.224px;">5152</span>
<span class="t" style="left:10.8px;top:518.0px;font-size:11px;color:#444746;letter-spacing:-0.224px;">5153</span>
<span class="t" style="left:10.8px;top:548.0px;font-size:11px;color:#444746;letter-spacing:-0.224px;">5154</span>
<span class="t" style="left:10.8px;top:578.0px;font-size:11px;color:#444746;letter-spacing:-0.224px;">5161</span>
<span class="t" style="left:10.8px;top:608.0px;font-size:11px;color:#444746;letter-spacing:-0.224px;">5162</span>
<span class="t" style="left:54.5px;top:292.5px;font-size:13px;color:#434343;letter-spacing:0.318px;width:99.0px;overflow:hidden;">01/12/2025 21:30</span>
<span class="t" style="left:162.3px;top:292.5px;font-size:13px;color:#434343;letter-spacing:0.046px;width:52.9px;overflow:hidden;">dieu.pdv@</span>
<span class="t" style="left:224.4px;top:292.5px;font-size:13px;color:#434343;letter-spacing:-0.189px;width:71.6px;overflow:hidden;">Ngành Hành chính</span>
<span class="t" style="left:305.4px;top:292.5px;font-size:13px;color:#434343;letter-spacing:-0.086px;">K131-04</span>
<span class="t" style="left:388.3px;top:292.5px;font-size:13px;color:#434343;letter-spacing:0.139px;width:161.0px;overflow:hidden;">HCNS - Tuyển dụng đào tạo</span>
<span class="t" style="left:54.5px;top:322.5px;font-size:13px;color:#434343;letter-spacing:0.318px;width:99.0px;overflow:hidden;">01/12/2025 22:51</span>
<span class="t" style="left:162.3px;top:322.5px;font-size:13px;color:#434343;letter-spacing:0.017px;width:52.9px;overflow:hidden;">tuyet2961</span>
<span class="t" style="left:224.4px;top:322.5px;font-size:13px;color:#434343;letter-spacing:-0.189px;width:71.6px;overflow:hidden;">Ngành Hành chính</span>
<span class="t" style="left:305.4px;top:322.5px;font-size:13px;color:#434343;letter-spacing:-0.086px;">K132-04</span>
<span class="t" style="left:388.3px;top:322.5px;font-size:13px;color:#434343;letter-spacing:-0.097px;width:161.0px;overflow:hidden;">HCNS/C&amp;B - Hợp đồng lao động</span>
<span class="t" style="left:54.5px;top:352.5px;font-size:13px;color:#434343;letter-spacing:0.318px;width:99.0px;overflow:hidden;">02/12/2025 8:44:</span>
<span class="t" style="left:162.3px;top:352.5px;font-size:13px;color:#434343;letter-spacing:0.156px;width:52.9px;overflow:hidden;">quetranph</span>
<span class="t" style="left:224.4px;top:352.5px;font-size:13px;color:#434343;letter-spacing:-0.189px;width:71.6px;overflow:hidden;">Ngành Hành chính</span>
<span class="t" style="left:305.4px;top:352.5px;font-size:13px;color:#434343;letter-spacing:-0.086px;">K132-04</span>
<span class="t" style="left:388.3px;top:352.5px;font-size:13px;color:#434343;letter-spacing:-0.097px;width:161.0px;overflow:hidden;">HCNS/C&amp;B - Hợp đồng lao động</span>
<span class="t" style="left:54.5px;top:382.5px;font-size:13px;color:#434343;letter-spacing:0.318px;width:99.0px;overflow:hidden;">03/12/2025 16:45</span>
<span class="t" style="left:162.3px;top:382.5px;font-size:13px;color:#434343;letter-spacing:0.152px;width:52.9px;overflow:hidden;">hoaigiang</span>
<span class="t" style="left:224.4px;top:382.5px;font-size:13px;color:#434343;letter-spacing:-0.189px;width:71.6px;overflow:hidden;">Ngành Hành chính</span>
<span class="t" style="left:305.4px;top:382.5px;font-size:13px;color:#434343;letter-spacing:-0.086px;">K132-04</span>
<span class="t" style="left:388.3px;top:382.5px;font-size:13px;color:#434343;letter-spacing:-0.097px;width:161.0px;overflow:hidden;">HCNS/C&amp;B - Hợp đồng lao động</span>
<span class="t" style="left:54.5px;top:416.5px;font-size:13px;color:#434343;letter-spacing:0.318px;width:99.0px;overflow:hidden;">03/12/2025 16:47</span>
<span class="t" style="left:162.3px;top:416.5px;font-size:13px;color:#434343;letter-spacing:-0.133px;width:52.9px;overflow:hidden;">nguyentp</span>
<span class="t" style="left:224.4px;top:416.5px;font-size:13px;color:#434343;letter-spacing:-0.189px;width:71.6px;overflow:hidden;">Ngành Hành chính</span>
<span class="t" style="left:305.4px;top:416.5px;font-size:13px;color:#434343;letter-spacing:-0.086px;">K132-04</span>
<span class="t" style="left:388.3px;top:416.5px;font-size:13px;color:#434343;letter-spacing:-0.097px;width:161.0px;overflow:hidden;">HCNS/C&amp;B - Hợp đồng lao động</span>
<span class="t" style="left:54.5px;top:469.5px;font-size:13px;color:#434343;letter-spacing:0.318px;width:99.0px;overflow:hidden;">03/12/2025 16:52</span>
<span class="t" style="left:162.3px;top:469.5px;font-size:13px;color:#434343;letter-spacing:-0.133px;width:52.9px;overflow:hidden;">nguyentp</span>
<span class="t" style="left:224.4px;top:469.5px;font-size:13px;color:#434343;letter-spacing:-0.189px;width:71.6px;overflow:hidden;">Ngành Hành chính</span>
<span class="t" style="left:305.4px;top:469.5px;font-size:13px;color:#434343;letter-spacing:-0.086px;">K132-04</span>
<span class="t" style="left:388.3px;top:469.5px;font-size:13px;color:#434343;letter-spacing:-0.113px;width:161.0px;overflow:hidden;">HCNS/C&amp;B - Bảo hiểm xã hội</span>
<span class="t" style="left:54.5px;top:518.5px;font-size:13px;color:#434343;letter-spacing:0.318px;width:99.0px;overflow:hidden;">03/12/2025 16:58</span>
<span class="t" style="left:162.3px;top:518.5px;font-size:13px;color:#434343;letter-spacing:0.254px;width:52.9px;overflow:hidden;">thuyduon</span>
<span class="t" style="left:224.4px;top:518.5px;font-size:13px;color:#434343;letter-spacing:-0.189px;width:71.6px;overflow:hidden;">Ngành Hành chính</span>
<span class="t" style="left:305.4px;top:518.5px;font-size:13px;color:#434343;letter-spacing:-0.086px;">K132-04</span>
<span class="t" style="left:388.3px;top:518.5px;font-size:13px;color:#434343;letter-spacing:-0.097px;width:161.0px;overflow:hidden;">HCNS/C&amp;B - Hợp đồng lao động</span>
<span class="t" style="left:54.5px;top:548.5px;font-size:13px;color:#434343;letter-spacing:0.318px;width:99.0px;overflow:hidden;">03/12/2025 17:01</span>
<span class="t" style="left:162.3px;top:548.5px;font-size:13px;color:#434343;letter-spacing:0.377px;width:52.9px;overflow:hidden;">lieunt@lo</span>
<span class="t" style="left:224.4px;top:548.5px;font-size:13px;color:#434343;letter-spacing:-0.189px;width:71.6px;overflow:hidden;">Ngành Hành chính</span>
<span class="t" style="left:305.4px;top:548.5px;font-size:13px;color:#434343;letter-spacing:-0.086px;">K132-04</span>
<span class="t" style="left:388.3px;top:548.5px;font-size:13px;color:#434343;letter-spacing:-0.097px;width:161.0px;overflow:hidden;">HCNS/C&amp;B - Hợp đồng lao động</span>
<span class="t" style="left:54.5px;top:578.5px;font-size:13px;color:#434343;letter-spacing:0.318px;width:99.0px;overflow:hidden;">03/12/2025 21:34</span>
<span class="t" style="left:162.3px;top:578.5px;font-size:13px;color:#434343;letter-spacing:0.068px;width:52.9px;overflow:hidden;">haianhtn@</span>
<span class="t" style="left:224.4px;top:578.5px;font-size:13px;color:#434343;letter-spacing:-0.189px;width:71.6px;overflow:hidden;">Ngành Hành chính</span>
<span class="t" style="left:305.4px;top:578.5px;font-size:13px;color:#434343;letter-spacing:-0.086px;">K132-04</span>
<span class="t" style="left:388.3px;top:578.5px;font-size:13px;color:#434343;letter-spacing:-0.113px;width:161.0px;overflow:hidden;">HCNS/C&amp;B - Bảo hiểm xã hội</span>
<span class="t" style="left:54.5px;top:608.5px;font-size:13px;color:#434343;letter-spacing:0.318px;width:99.0px;overflow:hidden;">03/12/2025 21:36</span>
<span class="t" style="left:162.3px;top:608.5px;font-size:13px;color:#434343;letter-spacing:0.068px;width:52.9px;overflow:hidden;">haianhtn@</span>
<span class="t" style="left:224.4px;top:608.5px;font-size:13px;color:#434343;letter-spacing:-0.189px;width:71.6px;overflow:hidden;">Ngành Hành chính</span>
<span class="t" style="left:305.4px;top:608.5px;font-size:13px;color:#434343;letter-spacing:-0.086px;">K132-04</span>
<span class="t" style="left:388.3px;top:608.5px;font-size:13px;color:#434343;letter-spacing:-0.097px;width:161.0px;overflow:hidden;">HCNS/C&amp;B - Hợp đồng lao động</span>
<span class="t" style="left:562.5px;top:292.5px;font-size:13px;color:#434343;letter-spacing:-0.050px;">Thực tế</span>
<span class="t" style="left:562.5px;top:322.5px;font-size:13px;color:#434343;letter-spacing:0.112px;">Giáo viên đi đúng trọng tâm học phần</span>
<span class="t" style="left:562.5px;top:352.5px;font-size:13px;color:#434343;letter-spacing:-0.004px;">thầy vui vẻ, đưa nhiều ví dụ thực tế để cùng nhau raise lên hướng giải quyết</span>
<span class="t" style="left:562.5px;top:382.5px;font-size:13px;color:#434343;letter-spacing:0.056px;">Thầy giáo hướng dẫn các tình huống rất thực tế và dạy thêm cả những kiến thức ngoài giáo trình</span>
<span class="t" style="left:562.5px;top:408.5px;font-size:13px;color:#434343;letter-spacing:0.014px;">Phương pháp thầy dạy rất ấn tượng, từ những điều luật sang tình huống thực tế và cách xử lý các</span>
<span class="t" style="left:562.5px;top:424.5px;font-size:13px;color:#434343;">hình thức khác</span>
<span class="t" style="left:562.5px;top:445.5px;font-size:13px;color:#434343;letter-spacing:-0.039px;">Cô dạy RẤT RẤT RẤT TÂM HUYẾT, thật sự rất tâm huyết. Mặc dù lớp hôm nào cũng tan muộn, mỗi</span>
<span class="t" style="left:562.5px;top:461.5px;font-size:13px;color:#434343;letter-spacing:0.072px;">buổi kéo dài có khi hơn 3 tiếng nhưng mỗi giây phút đều là những kiến thức chọn lọc và có ích vô</span>
<span class="t" style="left:562.5px;top:477.5px;font-size:13px;color:#434343;letter-spacing:0.035px;">cùng. Phương pháp và quy trình dạy của cô Mai Phương đều tỉ mỉ, tổng quát, dù xem lại video sau</span>
<span class="t" style="left:562.5px;top:492.5px;font-size:13px;color:#434343;letter-spacing:0.081px;">một thời gian vẫn cảm thấy dễ hiểu và có tính chân thực như đang học trực tiếp.</span>
<span class="t" style="left:562.5px;top:518.5px;font-size:13px;color:#434343;letter-spacing:0.055px;">thầy nói khó hiểu</span>
<span class="t" style="left:562.5px;top:548.5px;font-size:13px;color:#434343;letter-spacing:0.004px;">Tôi hài lòng với giáo viên</span>
<span class="t" style="left:562.5px;top:578.5px;font-size:13px;color:#434343;letter-spacing:0.031px;">cô rất tận tình, nhiệt huyết ạ</span>
<span class="t" style="left:562.5px;top:608.5px;font-size:13px;color:#434343;letter-spacing:-0.071px;">thầy dạy dễ hiểu ạ</span>
<span class="t" style="left:170.2px;top:664.0px;font-size:14px;color:#444746;letter-spacing:-0.004px;-webkit-text-stroke:0.3px #444746;">KSCL LỚP LẺ</span>
<span class="t" style="left:328.0px;top:664.0px;font-size:14px;color:#0b57d0;font-weight:700;letter-spacing:-0.207px;">KSCL</span>
<span class="t" style="left:409.2px;top:664.0px;font-size:14px;color:#444746;letter-spacing:0.212px;-webkit-text-stroke:0.3px #444746;">NGÀNH XUẤT NHẬP KHẨU</span>
<span class="t" style="left:636.2px;top:664.0px;font-size:14px;color:#444746;letter-spacing:0.103px;-webkit-text-stroke:0.3px #444746;">NGÀNH HCNS</span>
<span class="t" style="left:776.2px;top:664.0px;font-size:14px;color:#444746;letter-spacing:0.064px;-webkit-text-stroke:0.3px #444746;">NGÀNH KẾ TOÁN</span>
<span class="t" style="left:937.9px;top:664.0px;font-size:14px;color:#444746;letter-spacing:-0.425px;-webkit-text-stroke:0.3px #444746;">C</span>
<span class="t" style="left:1136.2px;top:665.5px;font-size:13px;color:#444746;">Đã lọc</span>
</div>
</body>
</html>
